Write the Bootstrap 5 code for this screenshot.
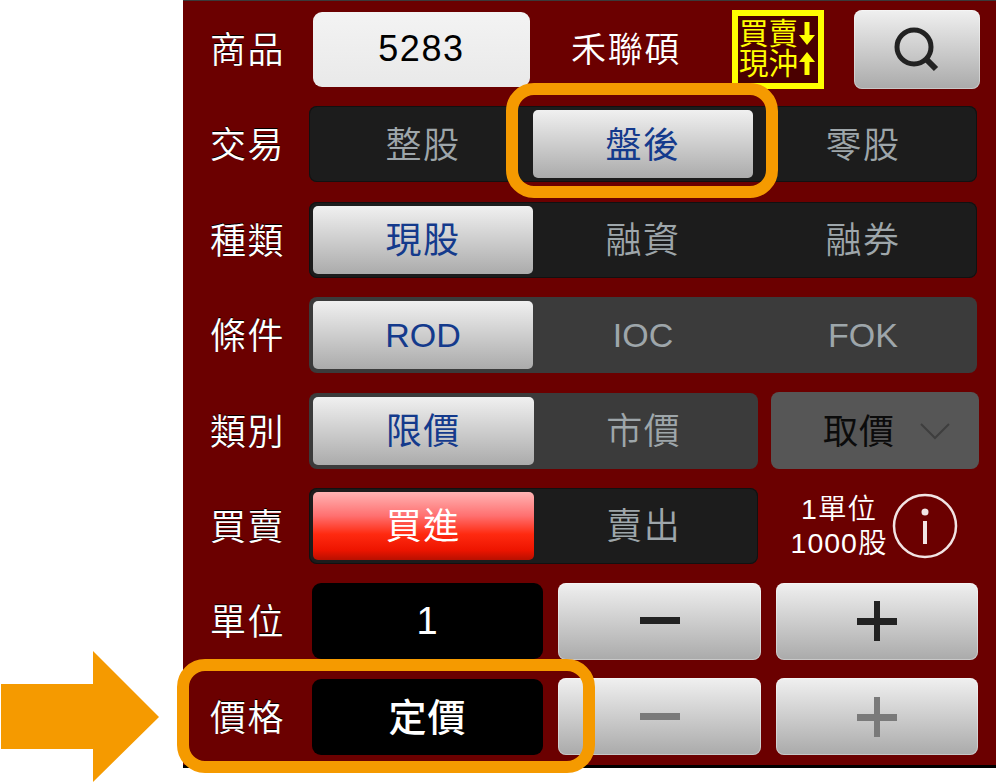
<!DOCTYPE html>
<html lang="zh-Hant">
<head>
<meta charset="utf-8">
<title>下單</title>
<link rel="stylesheet" href="https://cdn.jsdelivr.net/npm/bootstrap@5.3.0/dist/css/bootstrap.min.css">
<style>
html,body{margin:0;height:782px;overflow:hidden;background:#fff}
body{font-family:"Liberation Sans","Noto Sans CJK TC",sans-serif;position:relative}
.stage{width:996px;height:782px;position:relative}
.panel{margin-left:183px;width:813px;height:768px;background:#6b0000;border-bottom:3px solid #000;border-top:1px solid #3a3a3a;padding-top:10px}
.order-row{display:flex;align-items:center;height:76px;margin-bottom:19.4px;padding-left:27px}
.cjk{padding-top:3px}
.lbl{width:99px;flex:none;font-size:36px;letter-spacing:1.5px;color:#fff;line-height:1;text-shadow:0 -1px 0 #000;font-weight:350;padding-top:4px}
.gloss{background:linear-gradient(#f0f0f0,#aaa);border-radius:8px;box-shadow:inset 0 0 0 1px rgba(255,255,255,.35)}
.code-box{width:217px;height:75px;margin-left:4px;background:linear-gradient(#f3f3f3,#e9e9e9);border-radius:9px;font-size:36px;letter-spacing:1.6px;color:#000}
.stock-name{width:202px;font-size:35px;letter-spacing:1.8px;color:#fff;padding-left:41px;font-weight:350;padding-top:3px}
.trade-badge{width:92px;height:79px;border:6px solid #ff0;background:#4a0000;color:#ff0;font-size:29.500px;line-height:30px;padding:3px 0 0 1px}
.trade-badge span{display:flex;align-items:center;letter-spacing:0}
.search-btn{width:126px;height:79px;margin-left:30px}
.seg{height:76px;border-radius:8px;padding:4px;background:#1c1c1c;box-shadow:0 0 0 1px #111 inset;display:flex}
.seg-full{width:668px}
.seg-half{width:449px}
.seg-grey{background:#3b3b3b;box-shadow:none}
.seg-item{flex:1 1 0;display:flex;align-items:center;justify-content:center;font-size:36px;letter-spacing:1.5px;color:#9ea6aa;line-height:1;font-weight:350;padding-top:3px}
.seg-latin{font-size:34px;letter-spacing:0;padding-top:0;font-weight:400}
.seg-on{background:linear-gradient(#f0f0f0,#ababab);color:#143a8c;border-radius:5px;font-weight:400}
.seg-buy{background:linear-gradient(#ffb4b4 0,#ff7070 35%,#ff2a10 62%,#ee1500 85%,#b81000 100%);color:#fff;border-radius:5px;font-weight:400}
.picker{width:208px;height:77px;margin-left:13px;background:#565656;border-radius:8px;color:#0b0b0b;font-size:35px;letter-spacing:1px;padding-left:52px;gap:25px}
.picker-text{font-weight:400;padding-top:3px}
.unit-note{width:106px;margin-left:28px;text-align:center;color:#fff;font-size:28.500px;line-height:34px;letter-spacing:1px;font-weight:350}
.black-box{width:231px;height:76px;margin-left:3px;background:#000;border-radius:9px;color:#fff;font-size:38px;letter-spacing:1px;font-weight:500}
.step{width:203px;height:77px;margin-left:15px}
.step + .step{width:202px;margin-left:15px}
.callout{position:absolute;border:12px solid #f59a00;border-radius:28px;pointer-events:none}
.callout-a{left:506px;top:83px;width:272px;height:115px}
.callout-b{left:177px;top:659px;width:418px;height:114px}
.pointer{position:absolute;left:0;top:650px}
</style>
</head>
<body>
<div class="stage">
  <div class="panel">
    <div class="order-row">
      <div class="lbl">商品</div>
      <div class="code-box d-flex align-items-center justify-content-center">5283</div>
      <div class="stock-name">禾聯碩</div>
      <div class="trade-badge"><span>買賣<svg width="18" height="25" viewBox="0 0 18 25"><path d="M6.500 1h5v13H17l-8 10-8-10h5.500z" fill="#ff0"/></svg></span><span>現沖<svg width="18" height="25" viewBox="0 0 18 25"><path d="M6.500 24h5V11H17L9 1 1 11h5.500z" fill="#ff0"/></svg></span></div>
      <div class="search-btn gloss d-flex align-items-center justify-content-center">
        <svg width="46" height="46" viewBox="0 0 46 46"><circle cx="20" cy="21" r="17" fill="none" stroke="#222" stroke-width="5"/><path d="M32 33l10 10" stroke="#222" stroke-width="6"/></svg>
      </div>
    </div>
    <div class="order-row">
      <div class="lbl">交易</div>
      <div class="seg seg-full">
        <div class="seg-item">整股</div>
        <div class="seg-item seg-on">盤後</div>
        <div class="seg-item">零股</div>
      </div>
    </div>
    <div class="order-row">
      <div class="lbl">種類</div>
      <div class="seg seg-full">
        <div class="seg-item seg-on">現股</div>
        <div class="seg-item">融資</div>
        <div class="seg-item">融券</div>
      </div>
    </div>
    <div class="order-row">
      <div class="lbl">條件</div>
      <div class="seg seg-full seg-grey">
        <div class="seg-item seg-latin seg-on">ROD</div>
        <div class="seg-item seg-latin">IOC</div>
        <div class="seg-item seg-latin">FOK</div>
      </div>
    </div>
    <div class="order-row">
      <div class="lbl">類別</div>
      <div class="seg seg-half seg-grey">
        <div class="seg-item seg-on">限價</div>
        <div class="seg-item">市價</div>
      </div>
      <div class="picker d-flex align-items-center"><span class="picker-text">取價</span>
        <svg width="30" height="18" viewBox="0 0 30 18"><path d="M1 2l14 14L29 2" fill="none" stroke="#3e3e3e" stroke-width="2"/></svg>
      </div>
    </div>
    <div class="order-row">
      <div class="lbl">買賣</div>
      <div class="seg seg-half">
        <div class="seg-item seg-buy">買進</div>
        <div class="seg-item">賣出</div>
      </div>
      <div class="unit-note">1單位<br>1000股</div>
      <svg width="66" height="66" viewBox="0 0 66 66"><circle cx="33" cy="33" r="31" fill="none" stroke="#f2e4e4" stroke-width="2.500"/><circle cx="33" cy="19" r="3.500" fill="#f2e4e4"/><rect x="31" y="28" width="4" height="23" fill="#f2e4e4"/></svg>
    </div>
    <div class="order-row">
      <div class="lbl">單位</div>
      <div class="black-box d-flex align-items-center justify-content-center">1</div>
      <div class="step gloss d-flex align-items-center justify-content-center"><svg width="40" height="40" viewBox="0 0 40 40"><rect y="16" width="40" height="7" fill="#222"/></svg></div>
      <div class="step gloss d-flex align-items-center justify-content-center"><svg width="40" height="40" viewBox="0 0 40 40"><path d="M0 17h17V0h6v17h17v7H23v16h-6V24H0z" fill="#222"/></svg></div>
    </div>
    <div class="order-row">
      <div class="lbl">價格</div>
      <div class="black-box d-flex align-items-center justify-content-center"><span class="cjk">定價</span></div>
      <div class="step gloss d-flex align-items-center justify-content-center"><svg width="40" height="40" viewBox="0 0 40 40"><rect y="16" width="40" height="7" fill="#7a7a7a"/></svg></div>
      <div class="step gloss d-flex align-items-center justify-content-center"><svg width="40" height="40" viewBox="0 0 40 40"><path d="M0 17h17V0h6v17h17v7H23v16h-6V24H0z" fill="#7a7a7a"/></svg></div>
    </div>
  </div>
  <div class="callout callout-a"></div>
  <div class="callout callout-b"></div>
  <svg class="pointer" width="160" height="132" viewBox="0 0 160 132"><path d="M1 34h92V1l66 66-66 65V99H1z" fill="#f59a00"/></svg>
</div>
<script src="https://cdn.jsdelivr.net/npm/bootstrap@5.3.0/dist/js/bootstrap.bundle.min.js"></script>
</body>
</html>
